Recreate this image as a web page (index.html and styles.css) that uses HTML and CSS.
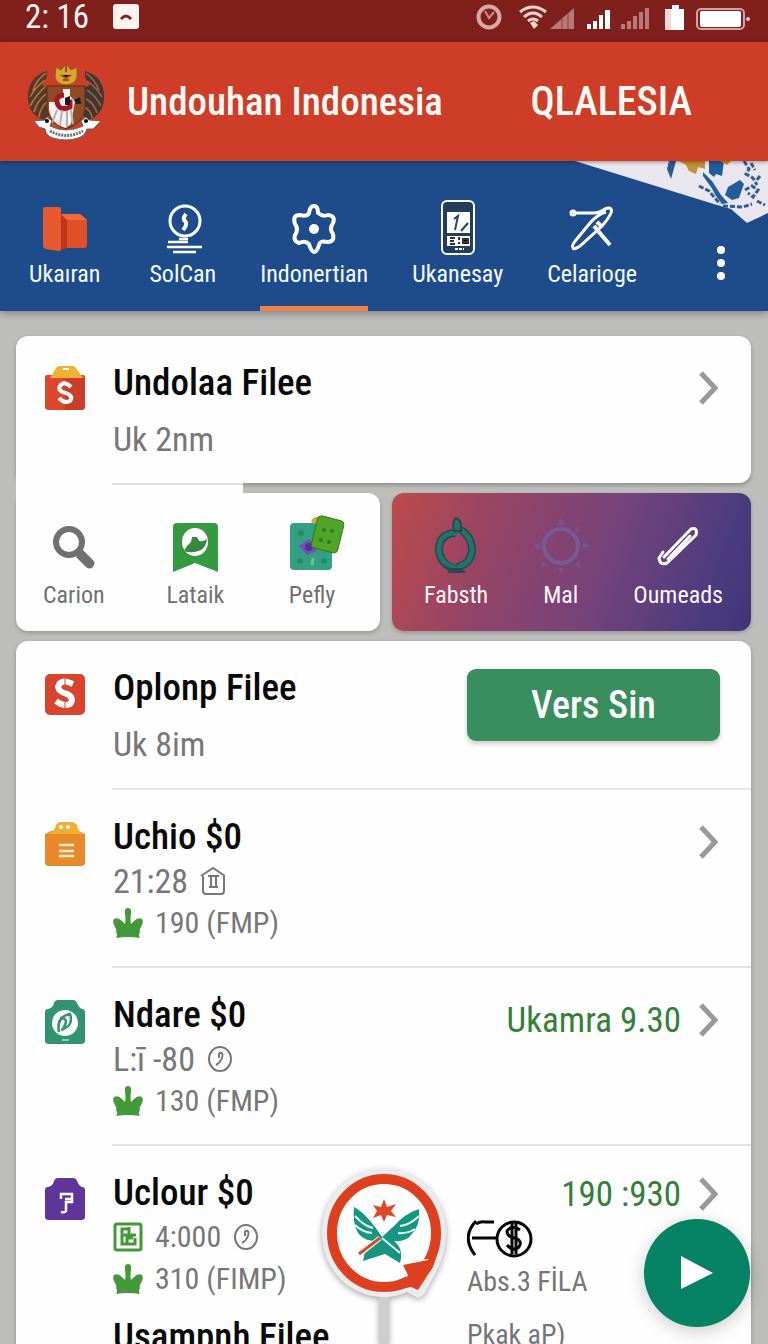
FILE: index.html
```html
<!DOCTYPE html>
<html lang="id">
<head>
<meta charset="utf-8">
<meta name="viewport" content="width=device-width, initial-scale=1">
<title>Undouhan Indonesia</title>
<link rel="stylesheet" href="styles.css">
</head>
<body>
<svg class="defs" aria-hidden="true">
  <symbol id="chevron" viewBox="0 0 22 36"><path d="M3 3L17 18L3 33" fill="none" stroke="#999" stroke-width="5"/></symbol>
  <symbol id="leaf" viewBox="0 0 30 30"><path d="M3 30Q5 27 3 24Q4 22 2 19Q-1 14 1 11Q5 9 9 13L12 16Q13 12 12 6Q11 0 15 0Q19 0 18 6Q17 12 18 16L21 13Q25 9 29 11Q31 14 28 19Q26 22 27 24Q25 27 27 30Q15 28 3 30Z" fill="#43993a"/></symbol>
  <symbol id="clock" viewBox="0 0 26 28"><ellipse cx="13" cy="14" rx="11" ry="12" fill="none" stroke="#777" stroke-width="2"/><path d="M12 8Q17 7 15 13Q13 18 9 20M12 8V13" fill="none" stroke="#777" stroke-width="2"/></symbol>
</svg>
<div class="app">
  <div class="status">
    <span class="time">2: 16</span>
    <svg width="26" height="26" viewBox="0 0 26 26"><rect width="26" height="25" rx="3" fill="#fff3f0"/><path d="M8 15Q13 9 18 15" fill="none" stroke="#7c2320" stroke-width="3"/></svg>
    <svg class="signals" width="274" height="28" viewBox="0 0 274 28">
      <circle cx="13" cy="14" r="10.500" fill="none" stroke="#d9a9a6" stroke-width="4"/><path d="M9 8L13 15L18 9" fill="none" stroke="#c98d8a" stroke-width="2"/>
      <g fill="none" stroke="#eed3d1" stroke-width="3"><path d="M44 9Q57-1 70 9"/><path d="M48 14Q57 6 66 14"/><path d="M52 18Q57 14 62 18"/></g><path d="M54 20L58 18L62 22L58 26Z" fill="#f3dedd"/>
      <path d="M74 26L98 5V26Z" fill="#b77a77"/><path d="M86 16V26M92 10V26" stroke="#8f403d"/>
      <path d="M111 26V21H115V26ZM117 26V18H121V26ZM123 26V12H127V26ZM129 26V7H134V26Z" fill="#fff"/>
      <path d="M147 26V21M153 26V18M159 26V13M165 26V9M171 26V5" stroke="#b77a77" stroke-width="4"/>
      <path d="M196 2H203V6H208V27H189V6H196Z" fill="#fff"/><path d="M189 7H195V27H189Z" fill="#efd9d8"/>
      <rect x="221" y="6" width="47" height="20" rx="4" fill="none" stroke="#d3a19f" stroke-width="2"/><rect x="224" y="8" width="41" height="16" rx="2" fill="#fff"/><circle cx="272" cy="16" r="2" fill="#e5c3c1"/>
    </svg>
  </div>

  <header class="header">
    <svg class="emblem" width="78" height="78" viewBox="0 0 78 78">
      <path d="M20 8Q0 14 1 36Q2 52 17 57L23 51Q18 37 21 25L15 22Q21 16 20 8Z" fill="#563a29"/>
      <path d="M58 8Q78 14 77 36Q76 52 61 57L55 51Q60 37 57 25L63 22Q57 16 58 8Z" fill="#3d3834"/>
      <g fill="none" stroke="#b87a43" stroke-width="1.500"><path d="M19 10Q9 17 6 28M18 17Q8 25 3 34M18 24Q10 31 3 43M19 31Q10 38 7 49M20 39Q13 45 12 54"/></g>
      <g fill="none" stroke="#bb6044" stroke-width="1.500"><path d="M59 10Q68 17 72 27M60 18Q70 25 75 34M60 27Q69 33 74 43M59 36Q67 40 70 50M57 44Q64 47 65 55"/></g>
      <path d="M29 4L34 7L39 1L44 7L50 4V14Q49 21 39 22Q29 21 28 14Z" fill="#d6a62f" stroke="#8d6122"/><path d="M39 0V9M34 12L39 15L44 12M36 17H42" stroke="#a74a20" stroke-width="2"/>
      <path d="M20 23H58V47Q55 61 39 66Q23 61 20 47Z" fill="#914b24" stroke="#54311e"/>
      <path d="M22 39H30V32H36V26H43V33L48 38L44 61L39 65Q25 62 22 47Z" fill="#f7eeee"/>
      <path d="M37 32Q27 33 31 42Q34 48 43 44V39H38" fill="none" stroke="#9e1829" stroke-width="5"/><path d="M38 35L43 33V42H38Z" fill="#19191e"/><path d="M47 37L53 34L54 41L49 41Z" fill="#202020"/><path d="M30 47L25 60M35 47L33 63M40 48V64M44 47L46 61" stroke="#b5b0b1" stroke-width="2"/>
      <path d="M7 58L18 57L20 54L25 58L23 63Q39 71 56 63L54 58L59 54L62 57L74 58L66 66L60 66Q58 73 51 75Q39 79 26 75Q19 73 18 66L12 64Z" fill="#fff" stroke="#6d6361"/><path d="M23 68Q39 77 56 68" fill="none" stroke="#61756d" stroke-width="3" stroke-dasharray="2 1"/><circle cx="20" cy="58" r="2"/><circle cx="59" cy="58" r="2"/>
    </svg>
    <h1 class="brand">Undouhan Indonesia</h1>
    <span class="brand-side">QLALESIA</span>
  </header>

  <nav class="nav">
    <svg class="map" width="193" height="90" viewBox="0 0 193 90">
      <path d="M0 0H193V56L172 62L156 48L142 44Z" fill="#e9e6ed"/><path d="M172 62L193 52V85Z" fill="#1d4b85"/>
      <path d="M94 0H101L98 11L96 18L92 8ZM134 0H149L147 15L141 13L139 16L134 12ZM128 11L137 20L146 34L153 42L147 43L141 35L136 26L128 15ZM153 26L165 19L169 23L164 37L157 39L150 34Z" fill="#245b9b"/>
      <path d="M104 0H130V8L123 6L121 13L114 10L111 4ZM145 0H156L152 4Z" fill="#c29335"/>
      <path d="M169 0L174 8L171 13L178 17L182 24M170 29L177 25L183 29L178 36L173 32M148 45L168 46L177 43M182 40L190 44M124 25L134 30L145 43M176 2L180 9M185 15L181 20" fill="none" stroke="#325b98" stroke-width="3" stroke-dasharray="5 2"/>
    </svg>
    <div class="tabs">
      <button class="tab"><svg width="52" height="56" viewBox="0 0 52 56"><path d="M4 8Q4 6 6 6L20 6Q22 6 22 8V48Q22 50 19 50L7 48Q4 47 4 45Z" fill="#e8592f"/><path d="M22 13H41L48 19V44Q48 47 45 47H22Z" fill="#e14f27"/><path d="M22 13L28 19V47L22 49Z" fill="#bc371a"/><path d="M22 13H41L48 19H28Z" fill="#f36a3d"/></svg><span>Ukaıran</span></button>
      <button class="tab"><svg width="52" height="56" viewBox="0 0 52 56" fill="none" stroke="#fff" stroke-width="3"><circle cx="28" cy="20" r="15"/><path d="M29 13Q25 18 28 20Q31 23 26 29" stroke-width="4"/><path d="M22 38H31M11 41H31M10 46H45M16 51H39" stroke-width="2.500"/></svg><span>SolCan</span></button>
      <button class="tab active"><svg width="52" height="56" viewBox="0 0 52 56"><path d="M26 5Q30 5 30 12Q35 16 40 14Q48 15 45 22Q41 28 45 33Q47 41 39 41Q32 39 31 44Q29 51 26 51Q23 50 21 43Q17 39 11 42Q5 40 7 34Q11 28 7 23Q4 14 12 14Q19 16 21 12Q22 5 26 5Z" fill="none" stroke="#fff" stroke-width="4"/><circle cx="26" cy="28" r="5" fill="#fff"/></svg><span>Indonertian</span></button>
      <button class="tab"><svg width="52" height="60" viewBox="0 0 52 60"><rect x="10" y="4" width="32" height="53" rx="5" fill="#233e5b" stroke="#fff" stroke-width="2"/><path d="M15 15H38V36H15ZM15 39H38V49H15Z" fill="#fff"/><path d="M22 22L26 19L23 33M29 34L36 26" fill="none" stroke="#27446e" stroke-width="2"/><path d="M18 41H23M18 44H22M18 47H23M27 40V43M27 45V47M31 47V42H36V47M31 45H36" stroke="#333" stroke-width="2"/><path d="M23 52H32" stroke="#fff" stroke-width="2" stroke-dasharray="3 1"/></svg><span>Ukanesay</span></button>
      <button class="tab"><svg width="52" height="56" viewBox="0 0 52 56" fill="none" stroke="#fff" stroke-width="3"><path d="M7 12H27Q34 12 39 8Q47 5 45 12Q43 17 36 25L14 45Q8 49 7 47Q5 45 10 39L24 22Q32 13 40 11"/><path d="M28 25L33 31M31 21L36 26" stroke-width="4"/><path d="M33 31L44 44" stroke-width="4"/><circle cx="7" cy="12" r="2"/></svg><span>Celarioge</span></button>
    </div>
    <button class="more" aria-label="Menu"><svg width="10" height="36" viewBox="0 0 10 36" fill="#fff"><circle cx="5" cy="5" r="4"/><circle cx="5" cy="18" r="4"/><circle cx="5" cy="31" r="4"/></svg></button>
  </nav>

  <main class="main">
    <section class="card">
      <div class="row">
        <svg class="icon" width="44" height="46" viewBox="0 0 44 46"><path d="M2 12Q2 10 4 10H40Q42 10 42 12V42Q42 45 38 45H6Q2 45 2 42Z" fill="#dc472e"/><path d="M22 13H42V42Q42 45 38 45H22Z" fill="#c93d29"/><path d="M7 13L13 3Q14 1 17 1H30Q32 1 33 3L40 13Z" fill="#edb333"/><path d="M20 4H26" stroke="#fff" stroke-width="2"/><path d="M28 22Q21 15 17 21Q14 26 23 28Q31 31 27 36Q21 39 16 33" fill="none" stroke="#fff" stroke-width="4"/></svg>
        <div class="body"><div class="text"><h2>Undolaa Filee</h2><p class="sub">Uk 2nm</p></div><a class="aside" href="#" aria-label="Undolaa Filee"><svg class="chev"><use href="#chevron"/></svg></a></div>
      </div>
    </section>

    <div class="quick">
      <section class="panel plain">
        <button class="action"><svg width="52" height="58" viewBox="0 0 52 58"><circle cx="21" cy="25" r="13" fill="none" stroke="#707070" stroke-width="6"/><path d="M30 36L33 35L34 32L45 43Q48 46 45 50Q42 53 38 50L28 40Z" fill="#707070"/></svg><span>Carion</span></button>
        <button class="action"><svg width="52" height="58" viewBox="0 0 52 58"><path d="M4 10Q4 6 8 6H45Q49 6 49 10V55L26 46L4 55Z" fill="#349940"/><ellipse cx="26" cy="25" rx="13" ry="14" fill="#fff"/><path d="M15 34Q18 28 22 25L23 20L28 20L30 24Q34 25 38 22Q37 30 32 33Q23 37 15 34Z" fill="#35883d"/></svg><span>Lataik</span></button>
        <button class="action"><svg class="spill" width="52" height="58" viewBox="4 0 52 58"><rect x="8" y="6" width="42" height="47" rx="4" fill="#34a083"/><g fill="#258c65"><circle cx="19" cy="16" r="3"/><circle cx="18" cy="44" r="3"/><circle cx="42" cy="44" r="3"/></g><path d="M30 48L31 41" stroke="#67c879" stroke-width="3"/><path d="M17 29L27 22L32 28L35 34L25 38Z" fill="#7850b5"/><circle cx="27" cy="30" r="4" fill="#503399"/><path d="M29 5Q31-1 38 0L36 8Z" fill="#cba544"/><rect x="32" y="1" width="27" height="33" rx="4" fill="#4fa526" stroke="#35761c" transform="rotate(14 46 18)"/><g fill="#3c7629"><circle cx="42" cy="13" r="2"/><circle cx="50" cy="14" r="2"/><circle cx="39" cy="23" r="2"/><circle cx="47" cy="25" r="2"/></g></svg><span>Pefly</span></button>
      </section>
      <section class="panel tinted">
        <button class="action"><svg width="52" height="58" viewBox="0 0 52 58"><path d="M25 16Q9 17 9 33Q10 43 17 48Q22 50 24 53M31 13Q42 20 42 33Q41 46 30 49Q28 50 27 53" fill="none" stroke="#284850" stroke-width="8"/><path d="M28 16Q9 15 9 33Q10 43 17 47Q23 49 25 52M31 13Q42 21 42 33Q41 46 30 49Q28 50 27 52" fill="none" stroke="#20756a" stroke-width="5"/><path d="M24 14Q22 4 26 1Q32 4 31 11V14Z" fill="#257565" stroke="#284850" stroke-width="2"/><path d="M17 56L22 51H31L36 56Z" fill="#284850"/></svg><span>Fabsth</span></button>
        <button class="action"><svg width="56" height="58" viewBox="0 0 56 58"><circle cx="28" cy="29" r="17" fill="none" stroke="#7a5999" stroke-width="4"/><g fill="#7a5290"><path d="M28 1L32 8H24ZM28 57L31 51H25ZM0 29L7 25V33ZM56 29L50 25V32ZM8 9L14 14L11 16ZM48 9L44 16L41 13ZM8 51L9 44L15 48ZM48 51L41 48L46 44Z"/></g></svg><span>Mal</span></button>
        <button class="action"><svg width="52" height="58" viewBox="0 0 52 58"><path d="M11 35L7 41Q8 49 15 46L44 18Q46 10 39 12L12 40M16 42L38 19" fill="none" stroke="#fff" stroke-width="3" stroke-linecap="round"/></svg><span>Oumeads</span></button>
      </section>
    </div>

    <section class="card list">
      <div class="row">
        <svg class="icon" width="44" height="46" viewBox="0 0 44 46"><rect x="2" y="4" width="40" height="41" rx="5" fill="#d9442e"/><path d="M30 14Q17 8 15 17Q16 22 24 24Q32 28 27 34Q21 37 13 31" fill="none" stroke="#fff" stroke-width="6"/><path d="M22 9V16M22 32V40" stroke="#d9442e"/></svg>
        <div class="body"><div class="text"><h2>Oplonp Filee</h2><p class="sub">Uk 8im</p></div><button class="primary">Vers Sin</button></div>
      </div>
      <div class="row">
        <svg class="icon low" width="44" height="46" viewBox="0 0 44 46"><path d="M2 13L8 10H36L42 13V42Q42 45 38 45H6Q2 45 2 42Z" fill="#e9892b"/><path d="M5 13Q12 10 13 4Q14 1 18 1H29Q32 1 34 4Q35 11 41 13Z" fill="#f0af32"/><circle cx="18" cy="6" r="2" fill="#fff"/><circle cx="25" cy="6" r="2" fill="#fff"/><path d="M16 24H31M16 30H31M16 35H31" stroke="#ffeacb" stroke-width="2.500"/></svg>
        <div class="body"><div class="text"><h2>Uchio $0</h2><p class="meta big">21:28 <svg width="26" height="28" viewBox="0 0 26 28" fill="none" stroke="#777" stroke-width="2"><path d="M1 9L13 1L25 9M3 9V24Q3 27 6 27H21Q24 27 24 24V9M8 9H19M9 20H18M11 10V20M16 10V20"/></svg></p><p class="meta"><svg class="leaf"><use href="#leaf"/></svg>190 (FMP)</p></div><a class="aside" href="#" aria-label="Uchio"><svg class="chev"><use href="#chevron"/></svg></a></div>
      </div>
      <div class="row">
        <svg class="icon low" width="44" height="46" viewBox="0 0 44 46"><path d="M2 13Q2 10 5 10Q10 9 11 4Q12 1 15 1H30Q33 1 34 4Q36 9 39 10Q42 10 42 13V42Q42 45 38 45H6Q2 45 2 42Z" fill="#32936f"/><circle cx="22" cy="24" r="13" fill="#fff"/><path d="M16 33Q13 18 27 15Q31 27 18 31M17 19Q27 19 20 30" fill="none" stroke="#32936f" stroke-width="2.500"/><path d="M19 41H26" stroke="#fff"/></svg>
        <div class="body"><div class="text"><h2>Ndare $0</h2><p class="meta big">L:ī -80 <svg class="clock"><use href="#clock"/></svg></p><p class="meta"><svg class="leaf"><use href="#leaf"/></svg>130 (FMP)</p></div><a class="aside" href="#"><span>Ukamra 9.30</span><svg class="chev"><use href="#chevron"/></svg></a></div>
      </div>
      <div class="row">
        <svg class="icon low" width="44" height="46" viewBox="0 0 44 46"><path d="M2 13Q2 10 5 10Q10 9 11 4Q12 1 15 1H30Q33 1 34 4Q36 9 39 10Q42 10 42 13V40Q42 43 38 43H6Q2 43 2 40Z" fill="#60359b"/><path d="M18 22V17H29V25H23V34Q22 36 18 35M22 22H29" fill="none" stroke="#fff" stroke-width="2.500"/></svg>
        <div class="body"><div class="text"><h2>Uclour $0</h2><p class="meta"><svg class="leaf" viewBox="0 0 30 30"><rect x="2" y="2" width="26" height="26" rx="2" fill="none" stroke="#43993a" stroke-width="3"/><path d="M15 7H9V22H22V16M16 5V13H23M10 13H16M14 22V16H20" fill="none" stroke="#43993a" stroke-width="3"/></svg>4:000 <svg class="clock"><use href="#clock"/></svg></p><p class="meta"><svg class="leaf"><use href="#leaf"/></svg>310 (FIMP)</p><h2 class="next">Usampnh Filee</h2></div>
          <div class="extra"><a class="aside" href="#"><span>190 :930</span><svg class="chev"><use href="#chevron"/></svg></a>
            <svg width="68" height="42" viewBox="0 0 68 42" fill="none" stroke="#050505" stroke-width="3"><path d="M9 3Q-6 19 8 37M9 6Q14 3 18 4H27M5 20H30"/><circle cx="47" cy="21" r="17"/><path d="M53 12Q45 6 40 13Q40 19 48 20Q56 23 52 29Q46 34 40 27M45 5V36M49 5V36"/></svg>
            <p class="note">Abs.3 FİLA</p><p class="note after">Pkak aP)</p></div>
        </div>
      </div>
    </section>
  </main>

  <div class="marker">
    <svg width="134" height="138" viewBox="0 0 134 138"><path d="M67 6C31 6 5 35 5 70C5 106 32 134 67 134Q79 134 90 129L101 135Q106 134 110 126L119 109Q129 91 129 70C129 35 102 6 67 6Z" fill="#ececec"/><ellipse cx="67" cy="70" rx="52" ry="54" fill="#fff" stroke="#dd401f" stroke-width="10"/><path d="M84 98L112 96L93 124Z" fill="#fff"/><path d="M86 102L111 97L121 89L116 104L101 127L94 124L84 126L91 112Z" fill="#dd401f"/><path d="M67 36L70 44L79 41L74 48L79 54L70 52L67 59L64 52L56 55L60 48L56 42L64 44Z" fill="#dd4928"/><path d="M37 44Q50 51 65 74L77 63Q87 51 102 46Q104 62 94 72Q89 79 77 78Q87 86 83 100L68 91L46 98L48 88L56 78Q34 76 37 44Z" fill="#159680"/><path d="M38 53Q47 63 56 65M38 62Q45 69 55 70M102 53Q93 62 83 63M98 66Q90 71 81 70M65 75L83 90" fill="none" stroke="#e5f4ed" stroke-width="2"/><path d="M44 90L63 75" stroke="#fff" stroke-width="5"/><path d="M42 91L63 75" stroke="#d44b2c" stroke-width="3"/></svg>
    <span class="stem"></span>
  </div>
  <button class="fab" aria-label="Play"><svg width="106" height="106" viewBox="0 0 106 106"><path d="M37 37L69 54L37 70Z" fill="#fff"/></svg></button>
</div>
</body>
</html>
```
FILE: styles.css
```css
* { box-sizing: border-box; }
body { margin: 0; font-family: "Roboto Condensed", Roboto, "Noto Sans", sans-serif; color: #080808; background: #bdbdbc; }
h1, h2, p { margin: 0; font-weight: 500; }
button { margin: 0; padding: 0; border: 0; background: none; font: inherit; color: inherit; cursor: pointer; }
a { color: inherit; text-decoration: none; }
svg { flex: none; }
.defs { position: absolute; width: 0; height: 0; }
.app { position: relative; height: 100vh; overflow: hidden; display: flex; flex-direction: column; }
.status { flex: none; display: flex; align-items: center; gap: 24px; height: 42px; padding: 0 18px 8px 25px; background: #80201c; color: #fff3f0; }
.time { font-size: 33px; line-height: 34px; }
.signals { margin-left: auto; }
.header { flex: none; position: relative; z-index: 2; display: flex; align-items: center; height: 119px; padding: 0 76px 0 27px; background: #cd3d27; color: #fffaf6; box-shadow: 0 1px 4px #0006; }
.brand { margin-left: 22px; font-size: 39px; line-height: 44px; }
.brand-side { margin-left: auto; font-size: 40px; line-height: 44px; font-weight: 500; }
.nav { flex: none; position: relative; z-index: 1; display: flex; height: 150px; padding: 0 42px 0 29px; background: #1e4c8b; color: #f4fbff; box-shadow: 0 2px 8px #0005; }
.map { position: absolute; top: 0; right: 0; }
.tabs { flex: 1; display: flex; justify-content: space-between; margin-right: 79px; }
.tab { position: relative; display: flex; flex-direction: column; align-items: center; justify-content: flex-end; padding-bottom: 15px; font-size: 24px; line-height: 34px; border-bottom: 5px solid transparent; }
.tab:first-child { margin-right: 5px; }
.tab.active { border-color: #f08348; }
.more { position: relative; align-self: flex-end; height: 36px; margin-bottom: 30px; }
.main { padding: 25px 17px 0 16px; }
.card { background: #fefefe; border-radius: 12px; box-shadow: 0 2px 4px #0004; }
.row { display: flex; align-items: flex-start; }
.icon { margin: 29px 25px 0 27px; }
.icon.low { margin-top: 33px; }
.body { flex: 1; display: flex; align-items: flex-start; padding: 24px 31px 22px 1px; }
.row + .row .body { border-top: 2px solid #e4e4e4; }
.text { flex: 1; white-space: nowrap; }
h2 { font-size: 37px; line-height: 46px; }
.sub { margin-top: 12px; font-size: 34px; line-height: 43px; font-weight: 400; color: #777; }
.meta { display: flex; align-items: center; gap: 12px; font-size: 30px; line-height: 42px; font-weight: 400; color: #777; }
.meta.big { font-size: 34px; }
.leaf { width: 30px; height: 30px; }
.clock { width: 26px; height: 28px; }
.chev { width: 22px; height: 36px; }
.aside { display: flex; align-items: center; justify-content: flex-end; gap: 17px; height: 56px; font-size: 35px; color: #328039; white-space: nowrap; }
.primary { flex: 0 1 253px; height: 72px; margin-top: 4px; border-radius: 9px; background: #388e5c; color: #fff; font-size: 38px; font-weight: 500; box-shadow: 0 3px 5px #0003; }
.quick { display: grid; grid-template-columns: 364fr 359fr; gap: 12px; margin: 10px 0; }
.panel { position: relative; height: 138px; display: flex; justify-content: space-between; border-radius: 12px; box-shadow: 0 2px 4px #0003; }
.plain { padding: 24px 42px 0 27px; background: #fefefe; color: #707070; }
.plain::before { content: ""; position: absolute; left: 0; top: -22px; width: 227px; height: 34px; background: linear-gradient(#ddd, #ddd) 96px 12px / 131px 2px no-repeat #fefefe; }
.tinted { padding: 24px 28px 0 32px; background: linear-gradient(110deg, #bd4b4b 0%, #954466 28%, #75437b 58%, #493b7e 88%, #403477 100%); color: #fff4fa; }
.action { position: relative; display: flex; flex-direction: column; align-items: center; gap: 3px; height: 95px; font-size: 24px; line-height: 34px; }
.spill { overflow: visible; }
.next { margin-top: 14px; }
.extra { flex: 0 1 253px; }
.extra > svg { display: block; }
.extra .aside { height: 48px; }
.note { font-size: 28px; line-height: 43px; font-weight: 400; color: #757575; }
.after { margin-top: 10px; }
.marker { position: absolute; left: 50%; bottom: 0; width: 134px; margin-left: -67px; display: flex; flex-direction: column; align-items: center; filter: drop-shadow(0 2px 3px #0005); }
.marker svg { position: relative; z-index: 1; }
.stem { width: 10px; height: 49px; margin-top: -6px; background: #cdcdcd; }
.fab { position: absolute; right: 18px; bottom: 17px; width: 106px; height: 108px; border-radius: 50%; background: #048263; box-shadow: 0 4px 18px #0003; }
```
